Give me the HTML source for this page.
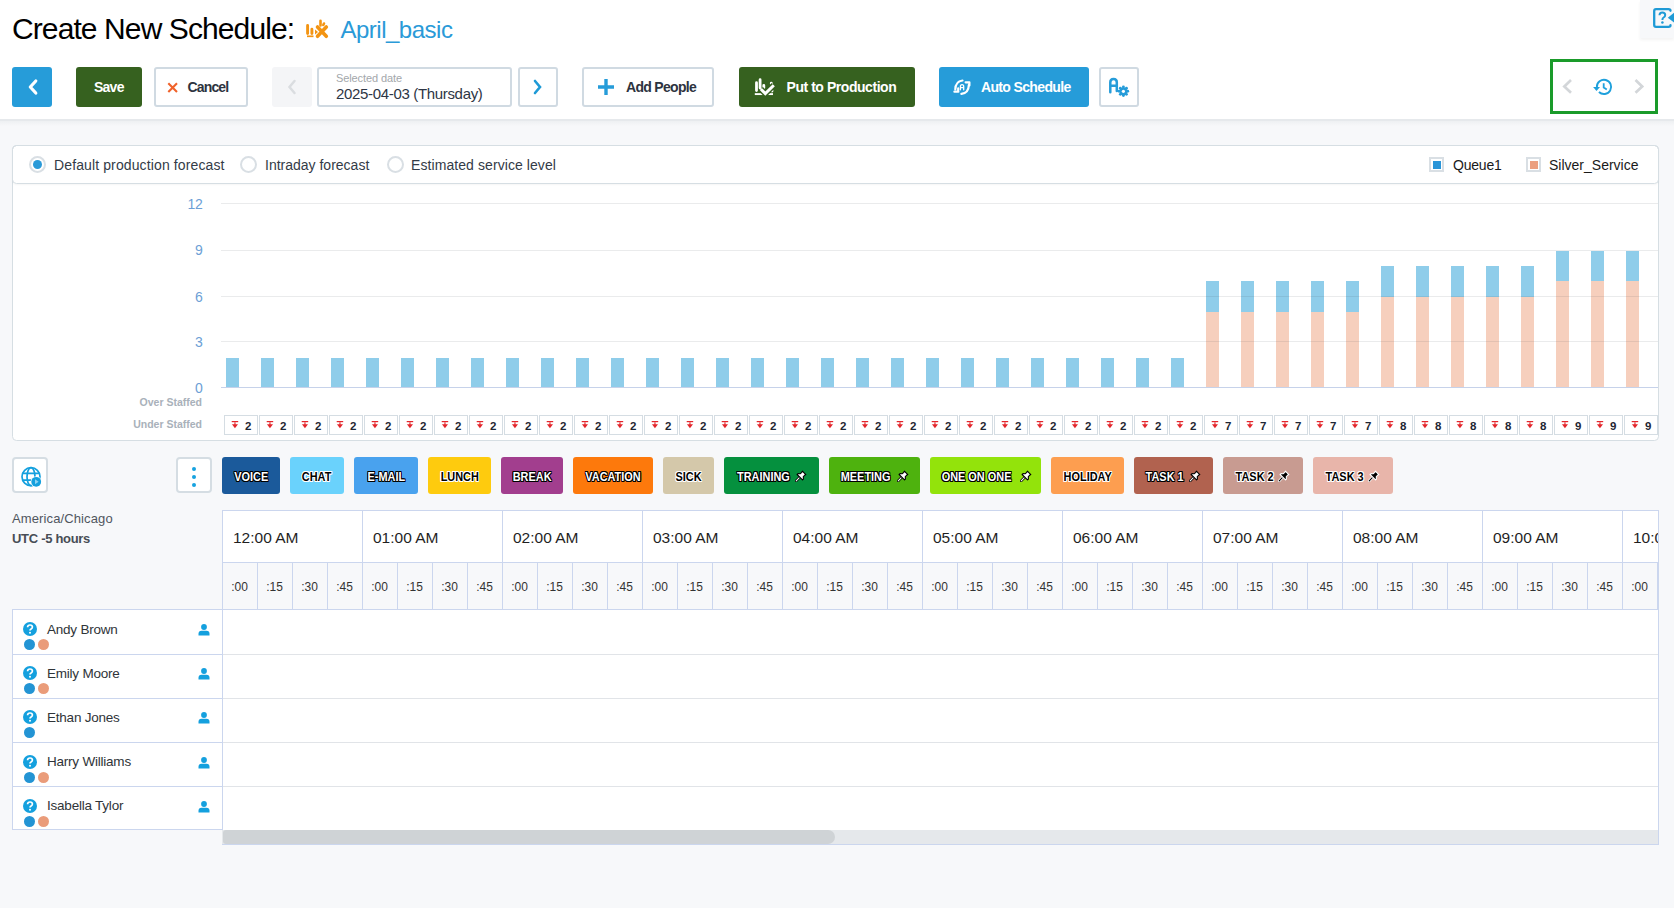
<!DOCTYPE html>
<html><head><meta charset="utf-8">
<style>
*{box-sizing:border-box;margin:0;padding:0}
html,body{width:1674px;height:908px;overflow:hidden;background:#f7f8fa;font-family:"Liberation Sans",sans-serif;position:relative}
.abs{position:absolute}
.btn{position:absolute;border-radius:3px;height:40px;top:67px}
.ol{background:#fff;border:2px solid #d0dae2}
.t{position:absolute;white-space:nowrap;line-height:1}
.chip{position:absolute;top:457px;height:37px;border-radius:3px}
.chip span{position:absolute;white-space:nowrap;font-weight:bold;font-size:13px;line-height:1;top:12px}
.w{color:#fff;text-shadow:-1px 0 #000,1px 0 #000,0 -1px #000,0 1px #000,-1px -1px #000,1px 1px #000,-1px 1px #000,1px -1px #000}
.k{color:#000;text-shadow:-1px 0 #fff,1px 0 #fff,0 -1px #fff,0 1px #fff,-1px -1px #fff,1px 1px #fff,-1px 1px #fff,1px -1px #fff}
</style></head><body>

<div class="abs" style="left:0;top:0;width:1674px;height:119px;background:#fff"></div>
<div class="abs" style="left:0;top:119px;width:1674px;height:2px;background:#e6e9ec"></div>
<div class="abs" style="left:0;top:121px;width:1674px;height:5px;background:linear-gradient(#eef0f2,#f7f8fa)"></div>
<div class="t" style="left:12px;top:14.00px;font-size:30px;color:#000;letter-spacing:-0.9px;">Create New Schedule:</div>
<svg class="abs" style="left:300px;top:10px" width="35" height="35" viewBox="0 0 35 35">
<g stroke="#f39412" stroke-linecap="round" fill="none">
<path d="M7.6 15.4V23.5M11.9 19.3V23.5" stroke-width="2.9"/>
<path d="M7 26.3H13.5" stroke-width="1.7" stroke-linecap="butt"/>
<path d="M20.5 10.8V15.5M24 13.5L23.3 15" stroke-width="2.6"/>
<path d="M17.5 17L26.3 26.3M26.3 17L17.5 26.3" stroke-width="3.6"/>
</g>
<path d="M15 19.5L18 22L15 24.5Z" fill="#f39412"/>
</svg>
<div class="t" style="left:340.5px;top:17.68px;font-size:24px;color:#2a9ad8;letter-spacing:-0.5px;">April_basic</div>
<div class="abs" style="left:1640px;top:0;width:34px;height:38px;background:#f7f8fa;box-shadow:0 2px 3px rgba(0,0,0,0.05)"></div>
<svg class="abs" style="left:1653px;top:8px" width="21" height="20" viewBox="0 0 21 20">
<path d="M17.5 2.8Q17.5 1.2 15.5 1.2H3Q1.2 1.2 1.2 3V17Q1.2 18.8 3 18.8H15.5Q17.5 18.8 17.5 17.2" fill="none" stroke="#1e9ad6" stroke-width="2.3" stroke-linecap="round"/>
<path d="M21 4.7L14.8 9.8L21 14.6Z" fill="#1e9ad6"/>
<path d="M6.5 7.3Q6.5 4.4 9.3 4.4Q12.2 4.4 12.2 7Q12.2 8.6 10.6 9.5Q9.4 10.2 9.4 12" fill="none" stroke="#1e9ad6" stroke-width="2"/>
<circle cx="9.4" cy="14.6" r="1.25" fill="#1e9ad6"/>
</svg>
<div class="btn" style="left:12px;width:40px;background:#269cd9"></div>
<svg class="abs" style="left:12px;top:67px" width="40" height="40"><path d="M23.8 14L18.3 20L23.8 26" fill="none" stroke="#fff" stroke-width="3.2" stroke-linecap="round" stroke-linejoin="round"/></svg>
<div class="btn" style="left:76px;width:66px;background:#36611f"></div>
<div class="t" style="left:94px;top:80.15px;font-size:14px;font-weight:bold;color:#fff;letter-spacing:-0.75px;">Save</div>
<div class="btn ol" style="left:154px;width:94px"></div>
<svg class="abs" style="left:166px;top:81px" width="13" height="13"><path d="M2.3 2.3L11 11M11 2.3L2.3 11" stroke="#f0622a" stroke-width="2.1"/></svg>
<div class="t" style="left:187.5px;top:80.15px;font-size:14px;font-weight:bold;color:#2d3340;letter-spacing:-0.85px;">Cancel</div>
<div class="btn" style="left:272px;width:40px;background:#f4f5f7"></div>
<svg class="abs" style="left:272px;top:67px" width="40" height="40"><path d="M22.5 14L17.5 20L22.5 26" fill="none" stroke="#dadde0" stroke-width="2.5" stroke-linecap="round"/></svg>
<div class="btn ol" style="left:317px;width:195px"></div>
<div class="t" style="left:336px;top:73.49px;font-size:11px;color:#a3a7ab;letter-spacing:-0.1px;">Selected date</div>
<div class="t" style="left:336px;top:86.20px;font-size:15px;color:#2d3645;letter-spacing:-0.33px;">2025-04-03 (Thursday)</div>
<div class="btn ol" style="left:518px;width:40px"></div>
<svg class="abs" style="left:518px;top:67px" width="39" height="40"><path d="M17 14L22 20L17 26" fill="none" stroke="#1e9ad6" stroke-width="2.6" stroke-linecap="round"/></svg>
<div class="btn ol" style="left:582px;width:132px"></div>
<svg class="abs" style="left:597px;top:78px" width="18" height="18"><path d="M9 1V17M1 9H17" stroke="#269cd9" stroke-width="3.4"/></svg>
<div class="t" style="left:626px;top:80.45px;font-size:14px;font-weight:bold;color:#2d3340;letter-spacing:-0.7px;">Add People</div>
<div class="btn" style="left:739px;width:176px;background:#36611f"></div>
<svg class="abs" style="left:754px;top:77px" width="22" height="20" viewBox="0 0 22 20" fill="none">
<g stroke="#fff" stroke-linecap="round"><path d="M2.5 5.7V13.5M6.1 2.7V11M9.8 8.3V11M17.3 6.2V6.8M18 13.6V14" stroke-width="2.8"/></g>
<path d="M0.8 17.1H19" stroke="#fff" stroke-width="1.9"/>
<path d="M6.8 12L11.3 16.6L19.8 8.2" stroke="#36611f" stroke-width="6" stroke-linejoin="miter"/>
<path d="M6.8 12L11.3 16.6L19.8 8.2" stroke="#fff" stroke-width="3" stroke-linejoin="miter"/></svg>
<div class="t" style="left:786.5px;top:80.45px;font-size:14px;font-weight:bold;color:#fff;letter-spacing:-0.45px;">Put to Production</div>
<div class="btn" style="left:939px;width:150px;background:#269cd9"></div>
<svg class="abs" style="left:953px;top:79px" width="18" height="17" viewBox="0 0 18 17" fill="none" stroke="#fff" stroke-width="2.2" stroke-linecap="round">
<path d="M9.5 1.5Q2.5 2.3 2.3 10.5"/><path d="M1.4 12.7H5.4M5.2 12.7V9.4"/>
<path d="M8.4 14.8Q15.6 14 15.8 6.2"/><path d="M12.6 3.3H16.4M16.4 3.3V6.4"/>
<path d="M7.4 10.8V7.6Q7.4 5.6 9.05 5.6Q10.7 5.6 10.7 7.6V10.8M7.4 8.7H10.7" stroke-width="1.3"/></svg>
<div class="t" style="left:981px;top:80.45px;font-size:14px;font-weight:bold;color:#fff;letter-spacing:-0.65px;">Auto Schedule</div>
<div class="btn ol" style="left:1099px;width:40px"></div>
<svg class="abs" style="left:1108px;top:76px" width="22" height="22" viewBox="0 0 22 22">
<path d="M2.3 16.2V6.3Q2.3 3 5.55 3Q8.8 3 8.8 6.3V15M2.3 9.7H8.8" fill="none" stroke="#269cd9" stroke-width="2.5" stroke-linecap="round"/>
<g transform="translate(15.4,15.3)"><circle r="5" fill="#fff"/><circle r="3.9" fill="#269cd9"/>
<g fill="#269cd9"><circle cx="0" cy="-4.3" r="1.45"/><circle cx="0" cy="4.3" r="1.45"/><circle cx="-4.3" cy="0" r="1.45"/><circle cx="4.3" cy="0" r="1.45"/>
<circle cx="3.04" cy="3.04" r="1.45"/><circle cx="-3.04" cy="3.04" r="1.45"/><circle cx="3.04" cy="-3.04" r="1.45"/><circle cx="-3.04" cy="-3.04" r="1.45"/></g>
<circle r="1.6" fill="#fff"/></g></svg>
<div class="abs" style="left:1550px;top:59px;width:108px;height:55px;border:3px solid #1a9b2a;background:#fff"></div>
<svg class="abs" style="left:1560px;top:77px" width="90" height="20" viewBox="0 0 90 20"><path d="M11 3L4.3 9.4L11 15.8" fill="none" stroke="#d3d6d9" stroke-width="2.7"/><path d="M75.5 3L82.2 9.4L75.5 15.8" fill="none" stroke="#d3d6d9" stroke-width="2.7"/><path d="M36.85 10 A7.15 7.15 0 1 1 38.94 14.96" fill="none" stroke="#1ea0dc" stroke-width="1.9"/><path d="M33.1 10L40 10L36.5 13.9Z" fill="#1ea0dc"/><path d="M43.7 6.2V10.5L46.8 12.5" fill="none" stroke="#1ea0dc" stroke-width="1.8"/></svg>
<div class="abs" style="left:12px;top:145px;width:1647px;height:296px;background:#fff;border:1px solid #d6dee3;border-radius:4.5px"></div>
<div class="abs" style="left:12px;top:145px;width:1647px;height:39px;border:1px solid #d6dee3;border-radius:4.5px;box-shadow:0 1px 2px rgba(0,0,0,0.04)"></div>
<div class="abs" style="left:29px;top:156px;width:17px;height:17px;border-radius:50%;border:2px solid #d9dfe4;background:#fff"></div><div class="abs" style="left:33px;top:160px;width:9px;height:9px;border-radius:50%;background:#2a9ad8"></div>
<div class="t" style="left:54px;top:158px;font-size:14px;color:#333b47;letter-spacing:0.12px">Default production forecast</div>
<div class="abs" style="left:240px;top:156px;width:17px;height:17px;border-radius:50%;border:2px solid #d9dfe4;background:#fff"></div>
<div class="t" style="left:265px;top:158px;font-size:14px;color:#333b47">Intraday forecast</div>
<div class="abs" style="left:387px;top:156px;width:17px;height:17px;border-radius:50%;border:2px solid #d9dfe4;background:#fff"></div>
<div class="t" style="left:411px;top:158px;font-size:14px;color:#333b47;letter-spacing:0.08px">Estimated service level</div>
<div class="abs" style="left:1429px;top:157px;width:15px;height:15px;border:2px solid #d9dfe4;background:#fff"></div><div class="abs" style="left:1432.5px;top:160.5px;width:8px;height:8px;background:#2a95d8"></div>
<div class="t" style="left:1453px;top:158px;font-size:14px;color:#1a1a1a;letter-spacing:-0.2px">Queue1</div>
<div class="abs" style="left:1526px;top:157px;width:15px;height:15px;border:2px solid #d9dfe4;background:#fff"></div><div class="abs" style="left:1529.5px;top:160.5px;width:8px;height:8px;background:#eb9f7f"></div>
<div class="t" style="left:1549px;top:158px;font-size:14px;color:#1a1a1a;letter-spacing:0px">Silver_Service</div>
<div class="t" style="left:150px;width:52.5px;text-align:right;top:197.15px;font-size:14px;color:#6d9fd6;letter-spacing:-0.3px">12</div>
<div class="t" style="left:150px;width:52.5px;text-align:right;top:243.45px;font-size:14px;color:#6d9fd6;letter-spacing:-0.3px">9</div>
<div class="t" style="left:150px;width:52.5px;text-align:right;top:289.65px;font-size:14px;color:#6d9fd6;letter-spacing:-0.3px">6</div>
<div class="t" style="left:150px;width:52.5px;text-align:right;top:335.45px;font-size:14px;color:#6d9fd6;letter-spacing:-0.3px">3</div>
<div class="t" style="left:150px;width:52.5px;text-align:right;top:381.45px;font-size:14px;color:#6d9fd6;letter-spacing:-0.3px">0</div>
<div class="t" style="left:100px;top:397.11px;font-size:10.5px;font-weight:bold;color:#a9b1ba;letter-spacing:0px;width:102px;text-align:right">Over Staffed</div>
<div class="t" style="left:100px;top:419.11px;font-size:10.5px;font-weight:bold;color:#a9b1ba;letter-spacing:0px;width:102px;text-align:right">Under Staffed</div>
<div class="abs" style="left:226px;top:358px;width:13px;height:29.2px;background:#8fcdea"></div>
<div class="abs" style="left:261px;top:358px;width:13px;height:29.2px;background:#8fcdea"></div>
<div class="abs" style="left:296px;top:358px;width:13px;height:29.2px;background:#8fcdea"></div>
<div class="abs" style="left:331px;top:358px;width:13px;height:29.2px;background:#8fcdea"></div>
<div class="abs" style="left:366px;top:358px;width:13px;height:29.2px;background:#8fcdea"></div>
<div class="abs" style="left:401px;top:358px;width:13px;height:29.2px;background:#8fcdea"></div>
<div class="abs" style="left:436px;top:358px;width:13px;height:29.2px;background:#8fcdea"></div>
<div class="abs" style="left:471px;top:358px;width:13px;height:29.2px;background:#8fcdea"></div>
<div class="abs" style="left:506px;top:358px;width:13px;height:29.2px;background:#8fcdea"></div>
<div class="abs" style="left:541px;top:358px;width:13px;height:29.2px;background:#8fcdea"></div>
<div class="abs" style="left:576px;top:358px;width:13px;height:29.2px;background:#8fcdea"></div>
<div class="abs" style="left:611px;top:358px;width:13px;height:29.2px;background:#8fcdea"></div>
<div class="abs" style="left:646px;top:358px;width:13px;height:29.2px;background:#8fcdea"></div>
<div class="abs" style="left:681px;top:358px;width:13px;height:29.2px;background:#8fcdea"></div>
<div class="abs" style="left:716px;top:358px;width:13px;height:29.2px;background:#8fcdea"></div>
<div class="abs" style="left:751px;top:358px;width:13px;height:29.2px;background:#8fcdea"></div>
<div class="abs" style="left:786px;top:358px;width:13px;height:29.2px;background:#8fcdea"></div>
<div class="abs" style="left:821px;top:358px;width:13px;height:29.2px;background:#8fcdea"></div>
<div class="abs" style="left:856px;top:358px;width:13px;height:29.2px;background:#8fcdea"></div>
<div class="abs" style="left:891px;top:358px;width:13px;height:29.2px;background:#8fcdea"></div>
<div class="abs" style="left:926px;top:358px;width:13px;height:29.2px;background:#8fcdea"></div>
<div class="abs" style="left:961px;top:358px;width:13px;height:29.2px;background:#8fcdea"></div>
<div class="abs" style="left:996px;top:358px;width:13px;height:29.2px;background:#8fcdea"></div>
<div class="abs" style="left:1031px;top:358px;width:13px;height:29.2px;background:#8fcdea"></div>
<div class="abs" style="left:1066px;top:358px;width:13px;height:29.2px;background:#8fcdea"></div>
<div class="abs" style="left:1101px;top:358px;width:13px;height:29.2px;background:#8fcdea"></div>
<div class="abs" style="left:1136px;top:358px;width:13px;height:29.2px;background:#8fcdea"></div>
<div class="abs" style="left:1171px;top:358px;width:13px;height:29.2px;background:#8fcdea"></div>
<div class="abs" style="left:1206px;top:312px;width:13px;height:75.2px;background:#f6cfbd"></div>
<div class="abs" style="left:1206px;top:281px;width:13px;height:31.0px;background:#8fcdea"></div>
<div class="abs" style="left:1241px;top:312px;width:13px;height:75.2px;background:#f6cfbd"></div>
<div class="abs" style="left:1241px;top:281px;width:13px;height:31.0px;background:#8fcdea"></div>
<div class="abs" style="left:1276px;top:312px;width:13px;height:75.2px;background:#f6cfbd"></div>
<div class="abs" style="left:1276px;top:281px;width:13px;height:31.0px;background:#8fcdea"></div>
<div class="abs" style="left:1311px;top:312px;width:13px;height:75.2px;background:#f6cfbd"></div>
<div class="abs" style="left:1311px;top:281px;width:13px;height:31.0px;background:#8fcdea"></div>
<div class="abs" style="left:1346px;top:312px;width:13px;height:75.2px;background:#f6cfbd"></div>
<div class="abs" style="left:1346px;top:281px;width:13px;height:31.0px;background:#8fcdea"></div>
<div class="abs" style="left:1381px;top:296.5px;width:13px;height:90.7px;background:#f6cfbd"></div>
<div class="abs" style="left:1381px;top:266px;width:13px;height:30.5px;background:#8fcdea"></div>
<div class="abs" style="left:1416px;top:296.5px;width:13px;height:90.7px;background:#f6cfbd"></div>
<div class="abs" style="left:1416px;top:266px;width:13px;height:30.5px;background:#8fcdea"></div>
<div class="abs" style="left:1451px;top:296.5px;width:13px;height:90.7px;background:#f6cfbd"></div>
<div class="abs" style="left:1451px;top:266px;width:13px;height:30.5px;background:#8fcdea"></div>
<div class="abs" style="left:1486px;top:296.5px;width:13px;height:90.7px;background:#f6cfbd"></div>
<div class="abs" style="left:1486px;top:266px;width:13px;height:30.5px;background:#8fcdea"></div>
<div class="abs" style="left:1521px;top:296.5px;width:13px;height:90.7px;background:#f6cfbd"></div>
<div class="abs" style="left:1521px;top:266px;width:13px;height:30.5px;background:#8fcdea"></div>
<div class="abs" style="left:1556px;top:281px;width:13px;height:106.2px;background:#f6cfbd"></div>
<div class="abs" style="left:1556px;top:250.5px;width:13px;height:30.5px;background:#8fcdea"></div>
<div class="abs" style="left:1591px;top:281px;width:13px;height:106.2px;background:#f6cfbd"></div>
<div class="abs" style="left:1591px;top:250.5px;width:13px;height:30.5px;background:#8fcdea"></div>
<div class="abs" style="left:1626px;top:281px;width:13px;height:106.2px;background:#f6cfbd"></div>
<div class="abs" style="left:1626px;top:250.5px;width:13px;height:30.5px;background:#8fcdea"></div>
<div class="abs" style="left:221px;top:203px;width:1437px;height:1px;background:rgba(60,70,80,0.11)"></div>
<div class="abs" style="left:221px;top:250px;width:1437px;height:1px;background:rgba(60,70,80,0.11)"></div>
<div class="abs" style="left:221px;top:296px;width:1437px;height:1px;background:rgba(60,70,80,0.11)"></div>
<div class="abs" style="left:221px;top:341px;width:1437px;height:1px;background:rgba(60,70,80,0.11)"></div>
<div class="abs" style="left:221px;top:387px;width:1437px;height:1px;background:#c6d2ea"></div>
<div class="abs" style="left:224px;top:415px;width:34px;height:20px;border:1px solid #d5dde3;background:#fff"><svg class="abs" style="left:6px;top:4px" width="8" height="9" viewBox="0 0 8 9"><rect x="0.7" y="1" width="6.5" height="1.2" fill="#e3262b"/><rect x="3.2" y="2.2" width="1.5" height="3" fill="#ec5a5e"/><path d="M0.9 4.3L7 4.3L3.95 8.3Z" fill="#e3262b"/></svg><div class="t" style="left:20px;top:4.8px;font-size:11.5px;font-weight:bold;color:#1f2633">2</div></div>
<div class="abs" style="left:259px;top:415px;width:34px;height:20px;border:1px solid #d5dde3;background:#fff"><svg class="abs" style="left:6px;top:4px" width="8" height="9" viewBox="0 0 8 9"><rect x="0.7" y="1" width="6.5" height="1.2" fill="#e3262b"/><rect x="3.2" y="2.2" width="1.5" height="3" fill="#ec5a5e"/><path d="M0.9 4.3L7 4.3L3.95 8.3Z" fill="#e3262b"/></svg><div class="t" style="left:20px;top:4.8px;font-size:11.5px;font-weight:bold;color:#1f2633">2</div></div>
<div class="abs" style="left:294px;top:415px;width:34px;height:20px;border:1px solid #d5dde3;background:#fff"><svg class="abs" style="left:6px;top:4px" width="8" height="9" viewBox="0 0 8 9"><rect x="0.7" y="1" width="6.5" height="1.2" fill="#e3262b"/><rect x="3.2" y="2.2" width="1.5" height="3" fill="#ec5a5e"/><path d="M0.9 4.3L7 4.3L3.95 8.3Z" fill="#e3262b"/></svg><div class="t" style="left:20px;top:4.8px;font-size:11.5px;font-weight:bold;color:#1f2633">2</div></div>
<div class="abs" style="left:329px;top:415px;width:34px;height:20px;border:1px solid #d5dde3;background:#fff"><svg class="abs" style="left:6px;top:4px" width="8" height="9" viewBox="0 0 8 9"><rect x="0.7" y="1" width="6.5" height="1.2" fill="#e3262b"/><rect x="3.2" y="2.2" width="1.5" height="3" fill="#ec5a5e"/><path d="M0.9 4.3L7 4.3L3.95 8.3Z" fill="#e3262b"/></svg><div class="t" style="left:20px;top:4.8px;font-size:11.5px;font-weight:bold;color:#1f2633">2</div></div>
<div class="abs" style="left:364px;top:415px;width:34px;height:20px;border:1px solid #d5dde3;background:#fff"><svg class="abs" style="left:6px;top:4px" width="8" height="9" viewBox="0 0 8 9"><rect x="0.7" y="1" width="6.5" height="1.2" fill="#e3262b"/><rect x="3.2" y="2.2" width="1.5" height="3" fill="#ec5a5e"/><path d="M0.9 4.3L7 4.3L3.95 8.3Z" fill="#e3262b"/></svg><div class="t" style="left:20px;top:4.8px;font-size:11.5px;font-weight:bold;color:#1f2633">2</div></div>
<div class="abs" style="left:399px;top:415px;width:34px;height:20px;border:1px solid #d5dde3;background:#fff"><svg class="abs" style="left:6px;top:4px" width="8" height="9" viewBox="0 0 8 9"><rect x="0.7" y="1" width="6.5" height="1.2" fill="#e3262b"/><rect x="3.2" y="2.2" width="1.5" height="3" fill="#ec5a5e"/><path d="M0.9 4.3L7 4.3L3.95 8.3Z" fill="#e3262b"/></svg><div class="t" style="left:20px;top:4.8px;font-size:11.5px;font-weight:bold;color:#1f2633">2</div></div>
<div class="abs" style="left:434px;top:415px;width:34px;height:20px;border:1px solid #d5dde3;background:#fff"><svg class="abs" style="left:6px;top:4px" width="8" height="9" viewBox="0 0 8 9"><rect x="0.7" y="1" width="6.5" height="1.2" fill="#e3262b"/><rect x="3.2" y="2.2" width="1.5" height="3" fill="#ec5a5e"/><path d="M0.9 4.3L7 4.3L3.95 8.3Z" fill="#e3262b"/></svg><div class="t" style="left:20px;top:4.8px;font-size:11.5px;font-weight:bold;color:#1f2633">2</div></div>
<div class="abs" style="left:469px;top:415px;width:34px;height:20px;border:1px solid #d5dde3;background:#fff"><svg class="abs" style="left:6px;top:4px" width="8" height="9" viewBox="0 0 8 9"><rect x="0.7" y="1" width="6.5" height="1.2" fill="#e3262b"/><rect x="3.2" y="2.2" width="1.5" height="3" fill="#ec5a5e"/><path d="M0.9 4.3L7 4.3L3.95 8.3Z" fill="#e3262b"/></svg><div class="t" style="left:20px;top:4.8px;font-size:11.5px;font-weight:bold;color:#1f2633">2</div></div>
<div class="abs" style="left:504px;top:415px;width:34px;height:20px;border:1px solid #d5dde3;background:#fff"><svg class="abs" style="left:6px;top:4px" width="8" height="9" viewBox="0 0 8 9"><rect x="0.7" y="1" width="6.5" height="1.2" fill="#e3262b"/><rect x="3.2" y="2.2" width="1.5" height="3" fill="#ec5a5e"/><path d="M0.9 4.3L7 4.3L3.95 8.3Z" fill="#e3262b"/></svg><div class="t" style="left:20px;top:4.8px;font-size:11.5px;font-weight:bold;color:#1f2633">2</div></div>
<div class="abs" style="left:539px;top:415px;width:34px;height:20px;border:1px solid #d5dde3;background:#fff"><svg class="abs" style="left:6px;top:4px" width="8" height="9" viewBox="0 0 8 9"><rect x="0.7" y="1" width="6.5" height="1.2" fill="#e3262b"/><rect x="3.2" y="2.2" width="1.5" height="3" fill="#ec5a5e"/><path d="M0.9 4.3L7 4.3L3.95 8.3Z" fill="#e3262b"/></svg><div class="t" style="left:20px;top:4.8px;font-size:11.5px;font-weight:bold;color:#1f2633">2</div></div>
<div class="abs" style="left:574px;top:415px;width:34px;height:20px;border:1px solid #d5dde3;background:#fff"><svg class="abs" style="left:6px;top:4px" width="8" height="9" viewBox="0 0 8 9"><rect x="0.7" y="1" width="6.5" height="1.2" fill="#e3262b"/><rect x="3.2" y="2.2" width="1.5" height="3" fill="#ec5a5e"/><path d="M0.9 4.3L7 4.3L3.95 8.3Z" fill="#e3262b"/></svg><div class="t" style="left:20px;top:4.8px;font-size:11.5px;font-weight:bold;color:#1f2633">2</div></div>
<div class="abs" style="left:609px;top:415px;width:34px;height:20px;border:1px solid #d5dde3;background:#fff"><svg class="abs" style="left:6px;top:4px" width="8" height="9" viewBox="0 0 8 9"><rect x="0.7" y="1" width="6.5" height="1.2" fill="#e3262b"/><rect x="3.2" y="2.2" width="1.5" height="3" fill="#ec5a5e"/><path d="M0.9 4.3L7 4.3L3.95 8.3Z" fill="#e3262b"/></svg><div class="t" style="left:20px;top:4.8px;font-size:11.5px;font-weight:bold;color:#1f2633">2</div></div>
<div class="abs" style="left:644px;top:415px;width:34px;height:20px;border:1px solid #d5dde3;background:#fff"><svg class="abs" style="left:6px;top:4px" width="8" height="9" viewBox="0 0 8 9"><rect x="0.7" y="1" width="6.5" height="1.2" fill="#e3262b"/><rect x="3.2" y="2.2" width="1.5" height="3" fill="#ec5a5e"/><path d="M0.9 4.3L7 4.3L3.95 8.3Z" fill="#e3262b"/></svg><div class="t" style="left:20px;top:4.8px;font-size:11.5px;font-weight:bold;color:#1f2633">2</div></div>
<div class="abs" style="left:679px;top:415px;width:34px;height:20px;border:1px solid #d5dde3;background:#fff"><svg class="abs" style="left:6px;top:4px" width="8" height="9" viewBox="0 0 8 9"><rect x="0.7" y="1" width="6.5" height="1.2" fill="#e3262b"/><rect x="3.2" y="2.2" width="1.5" height="3" fill="#ec5a5e"/><path d="M0.9 4.3L7 4.3L3.95 8.3Z" fill="#e3262b"/></svg><div class="t" style="left:20px;top:4.8px;font-size:11.5px;font-weight:bold;color:#1f2633">2</div></div>
<div class="abs" style="left:714px;top:415px;width:34px;height:20px;border:1px solid #d5dde3;background:#fff"><svg class="abs" style="left:6px;top:4px" width="8" height="9" viewBox="0 0 8 9"><rect x="0.7" y="1" width="6.5" height="1.2" fill="#e3262b"/><rect x="3.2" y="2.2" width="1.5" height="3" fill="#ec5a5e"/><path d="M0.9 4.3L7 4.3L3.95 8.3Z" fill="#e3262b"/></svg><div class="t" style="left:20px;top:4.8px;font-size:11.5px;font-weight:bold;color:#1f2633">2</div></div>
<div class="abs" style="left:749px;top:415px;width:34px;height:20px;border:1px solid #d5dde3;background:#fff"><svg class="abs" style="left:6px;top:4px" width="8" height="9" viewBox="0 0 8 9"><rect x="0.7" y="1" width="6.5" height="1.2" fill="#e3262b"/><rect x="3.2" y="2.2" width="1.5" height="3" fill="#ec5a5e"/><path d="M0.9 4.3L7 4.3L3.95 8.3Z" fill="#e3262b"/></svg><div class="t" style="left:20px;top:4.8px;font-size:11.5px;font-weight:bold;color:#1f2633">2</div></div>
<div class="abs" style="left:784px;top:415px;width:34px;height:20px;border:1px solid #d5dde3;background:#fff"><svg class="abs" style="left:6px;top:4px" width="8" height="9" viewBox="0 0 8 9"><rect x="0.7" y="1" width="6.5" height="1.2" fill="#e3262b"/><rect x="3.2" y="2.2" width="1.5" height="3" fill="#ec5a5e"/><path d="M0.9 4.3L7 4.3L3.95 8.3Z" fill="#e3262b"/></svg><div class="t" style="left:20px;top:4.8px;font-size:11.5px;font-weight:bold;color:#1f2633">2</div></div>
<div class="abs" style="left:819px;top:415px;width:34px;height:20px;border:1px solid #d5dde3;background:#fff"><svg class="abs" style="left:6px;top:4px" width="8" height="9" viewBox="0 0 8 9"><rect x="0.7" y="1" width="6.5" height="1.2" fill="#e3262b"/><rect x="3.2" y="2.2" width="1.5" height="3" fill="#ec5a5e"/><path d="M0.9 4.3L7 4.3L3.95 8.3Z" fill="#e3262b"/></svg><div class="t" style="left:20px;top:4.8px;font-size:11.5px;font-weight:bold;color:#1f2633">2</div></div>
<div class="abs" style="left:854px;top:415px;width:34px;height:20px;border:1px solid #d5dde3;background:#fff"><svg class="abs" style="left:6px;top:4px" width="8" height="9" viewBox="0 0 8 9"><rect x="0.7" y="1" width="6.5" height="1.2" fill="#e3262b"/><rect x="3.2" y="2.2" width="1.5" height="3" fill="#ec5a5e"/><path d="M0.9 4.3L7 4.3L3.95 8.3Z" fill="#e3262b"/></svg><div class="t" style="left:20px;top:4.8px;font-size:11.5px;font-weight:bold;color:#1f2633">2</div></div>
<div class="abs" style="left:889px;top:415px;width:34px;height:20px;border:1px solid #d5dde3;background:#fff"><svg class="abs" style="left:6px;top:4px" width="8" height="9" viewBox="0 0 8 9"><rect x="0.7" y="1" width="6.5" height="1.2" fill="#e3262b"/><rect x="3.2" y="2.2" width="1.5" height="3" fill="#ec5a5e"/><path d="M0.9 4.3L7 4.3L3.95 8.3Z" fill="#e3262b"/></svg><div class="t" style="left:20px;top:4.8px;font-size:11.5px;font-weight:bold;color:#1f2633">2</div></div>
<div class="abs" style="left:924px;top:415px;width:34px;height:20px;border:1px solid #d5dde3;background:#fff"><svg class="abs" style="left:6px;top:4px" width="8" height="9" viewBox="0 0 8 9"><rect x="0.7" y="1" width="6.5" height="1.2" fill="#e3262b"/><rect x="3.2" y="2.2" width="1.5" height="3" fill="#ec5a5e"/><path d="M0.9 4.3L7 4.3L3.95 8.3Z" fill="#e3262b"/></svg><div class="t" style="left:20px;top:4.8px;font-size:11.5px;font-weight:bold;color:#1f2633">2</div></div>
<div class="abs" style="left:959px;top:415px;width:34px;height:20px;border:1px solid #d5dde3;background:#fff"><svg class="abs" style="left:6px;top:4px" width="8" height="9" viewBox="0 0 8 9"><rect x="0.7" y="1" width="6.5" height="1.2" fill="#e3262b"/><rect x="3.2" y="2.2" width="1.5" height="3" fill="#ec5a5e"/><path d="M0.9 4.3L7 4.3L3.95 8.3Z" fill="#e3262b"/></svg><div class="t" style="left:20px;top:4.8px;font-size:11.5px;font-weight:bold;color:#1f2633">2</div></div>
<div class="abs" style="left:994px;top:415px;width:34px;height:20px;border:1px solid #d5dde3;background:#fff"><svg class="abs" style="left:6px;top:4px" width="8" height="9" viewBox="0 0 8 9"><rect x="0.7" y="1" width="6.5" height="1.2" fill="#e3262b"/><rect x="3.2" y="2.2" width="1.5" height="3" fill="#ec5a5e"/><path d="M0.9 4.3L7 4.3L3.95 8.3Z" fill="#e3262b"/></svg><div class="t" style="left:20px;top:4.8px;font-size:11.5px;font-weight:bold;color:#1f2633">2</div></div>
<div class="abs" style="left:1029px;top:415px;width:34px;height:20px;border:1px solid #d5dde3;background:#fff"><svg class="abs" style="left:6px;top:4px" width="8" height="9" viewBox="0 0 8 9"><rect x="0.7" y="1" width="6.5" height="1.2" fill="#e3262b"/><rect x="3.2" y="2.2" width="1.5" height="3" fill="#ec5a5e"/><path d="M0.9 4.3L7 4.3L3.95 8.3Z" fill="#e3262b"/></svg><div class="t" style="left:20px;top:4.8px;font-size:11.5px;font-weight:bold;color:#1f2633">2</div></div>
<div class="abs" style="left:1064px;top:415px;width:34px;height:20px;border:1px solid #d5dde3;background:#fff"><svg class="abs" style="left:6px;top:4px" width="8" height="9" viewBox="0 0 8 9"><rect x="0.7" y="1" width="6.5" height="1.2" fill="#e3262b"/><rect x="3.2" y="2.2" width="1.5" height="3" fill="#ec5a5e"/><path d="M0.9 4.3L7 4.3L3.95 8.3Z" fill="#e3262b"/></svg><div class="t" style="left:20px;top:4.8px;font-size:11.5px;font-weight:bold;color:#1f2633">2</div></div>
<div class="abs" style="left:1099px;top:415px;width:34px;height:20px;border:1px solid #d5dde3;background:#fff"><svg class="abs" style="left:6px;top:4px" width="8" height="9" viewBox="0 0 8 9"><rect x="0.7" y="1" width="6.5" height="1.2" fill="#e3262b"/><rect x="3.2" y="2.2" width="1.5" height="3" fill="#ec5a5e"/><path d="M0.9 4.3L7 4.3L3.95 8.3Z" fill="#e3262b"/></svg><div class="t" style="left:20px;top:4.8px;font-size:11.5px;font-weight:bold;color:#1f2633">2</div></div>
<div class="abs" style="left:1134px;top:415px;width:34px;height:20px;border:1px solid #d5dde3;background:#fff"><svg class="abs" style="left:6px;top:4px" width="8" height="9" viewBox="0 0 8 9"><rect x="0.7" y="1" width="6.5" height="1.2" fill="#e3262b"/><rect x="3.2" y="2.2" width="1.5" height="3" fill="#ec5a5e"/><path d="M0.9 4.3L7 4.3L3.95 8.3Z" fill="#e3262b"/></svg><div class="t" style="left:20px;top:4.8px;font-size:11.5px;font-weight:bold;color:#1f2633">2</div></div>
<div class="abs" style="left:1169px;top:415px;width:34px;height:20px;border:1px solid #d5dde3;background:#fff"><svg class="abs" style="left:6px;top:4px" width="8" height="9" viewBox="0 0 8 9"><rect x="0.7" y="1" width="6.5" height="1.2" fill="#e3262b"/><rect x="3.2" y="2.2" width="1.5" height="3" fill="#ec5a5e"/><path d="M0.9 4.3L7 4.3L3.95 8.3Z" fill="#e3262b"/></svg><div class="t" style="left:20px;top:4.8px;font-size:11.5px;font-weight:bold;color:#1f2633">2</div></div>
<div class="abs" style="left:1204px;top:415px;width:34px;height:20px;border:1px solid #d5dde3;background:#fff"><svg class="abs" style="left:6px;top:4px" width="8" height="9" viewBox="0 0 8 9"><rect x="0.7" y="1" width="6.5" height="1.2" fill="#e3262b"/><rect x="3.2" y="2.2" width="1.5" height="3" fill="#ec5a5e"/><path d="M0.9 4.3L7 4.3L3.95 8.3Z" fill="#e3262b"/></svg><div class="t" style="left:20px;top:4.8px;font-size:11.5px;font-weight:bold;color:#1f2633">7</div></div>
<div class="abs" style="left:1239px;top:415px;width:34px;height:20px;border:1px solid #d5dde3;background:#fff"><svg class="abs" style="left:6px;top:4px" width="8" height="9" viewBox="0 0 8 9"><rect x="0.7" y="1" width="6.5" height="1.2" fill="#e3262b"/><rect x="3.2" y="2.2" width="1.5" height="3" fill="#ec5a5e"/><path d="M0.9 4.3L7 4.3L3.95 8.3Z" fill="#e3262b"/></svg><div class="t" style="left:20px;top:4.8px;font-size:11.5px;font-weight:bold;color:#1f2633">7</div></div>
<div class="abs" style="left:1274px;top:415px;width:34px;height:20px;border:1px solid #d5dde3;background:#fff"><svg class="abs" style="left:6px;top:4px" width="8" height="9" viewBox="0 0 8 9"><rect x="0.7" y="1" width="6.5" height="1.2" fill="#e3262b"/><rect x="3.2" y="2.2" width="1.5" height="3" fill="#ec5a5e"/><path d="M0.9 4.3L7 4.3L3.95 8.3Z" fill="#e3262b"/></svg><div class="t" style="left:20px;top:4.8px;font-size:11.5px;font-weight:bold;color:#1f2633">7</div></div>
<div class="abs" style="left:1309px;top:415px;width:34px;height:20px;border:1px solid #d5dde3;background:#fff"><svg class="abs" style="left:6px;top:4px" width="8" height="9" viewBox="0 0 8 9"><rect x="0.7" y="1" width="6.5" height="1.2" fill="#e3262b"/><rect x="3.2" y="2.2" width="1.5" height="3" fill="#ec5a5e"/><path d="M0.9 4.3L7 4.3L3.95 8.3Z" fill="#e3262b"/></svg><div class="t" style="left:20px;top:4.8px;font-size:11.5px;font-weight:bold;color:#1f2633">7</div></div>
<div class="abs" style="left:1344px;top:415px;width:34px;height:20px;border:1px solid #d5dde3;background:#fff"><svg class="abs" style="left:6px;top:4px" width="8" height="9" viewBox="0 0 8 9"><rect x="0.7" y="1" width="6.5" height="1.2" fill="#e3262b"/><rect x="3.2" y="2.2" width="1.5" height="3" fill="#ec5a5e"/><path d="M0.9 4.3L7 4.3L3.95 8.3Z" fill="#e3262b"/></svg><div class="t" style="left:20px;top:4.8px;font-size:11.5px;font-weight:bold;color:#1f2633">7</div></div>
<div class="abs" style="left:1379px;top:415px;width:34px;height:20px;border:1px solid #d5dde3;background:#fff"><svg class="abs" style="left:6px;top:4px" width="8" height="9" viewBox="0 0 8 9"><rect x="0.7" y="1" width="6.5" height="1.2" fill="#e3262b"/><rect x="3.2" y="2.2" width="1.5" height="3" fill="#ec5a5e"/><path d="M0.9 4.3L7 4.3L3.95 8.3Z" fill="#e3262b"/></svg><div class="t" style="left:20px;top:4.8px;font-size:11.5px;font-weight:bold;color:#1f2633">8</div></div>
<div class="abs" style="left:1414px;top:415px;width:34px;height:20px;border:1px solid #d5dde3;background:#fff"><svg class="abs" style="left:6px;top:4px" width="8" height="9" viewBox="0 0 8 9"><rect x="0.7" y="1" width="6.5" height="1.2" fill="#e3262b"/><rect x="3.2" y="2.2" width="1.5" height="3" fill="#ec5a5e"/><path d="M0.9 4.3L7 4.3L3.95 8.3Z" fill="#e3262b"/></svg><div class="t" style="left:20px;top:4.8px;font-size:11.5px;font-weight:bold;color:#1f2633">8</div></div>
<div class="abs" style="left:1449px;top:415px;width:34px;height:20px;border:1px solid #d5dde3;background:#fff"><svg class="abs" style="left:6px;top:4px" width="8" height="9" viewBox="0 0 8 9"><rect x="0.7" y="1" width="6.5" height="1.2" fill="#e3262b"/><rect x="3.2" y="2.2" width="1.5" height="3" fill="#ec5a5e"/><path d="M0.9 4.3L7 4.3L3.95 8.3Z" fill="#e3262b"/></svg><div class="t" style="left:20px;top:4.8px;font-size:11.5px;font-weight:bold;color:#1f2633">8</div></div>
<div class="abs" style="left:1484px;top:415px;width:34px;height:20px;border:1px solid #d5dde3;background:#fff"><svg class="abs" style="left:6px;top:4px" width="8" height="9" viewBox="0 0 8 9"><rect x="0.7" y="1" width="6.5" height="1.2" fill="#e3262b"/><rect x="3.2" y="2.2" width="1.5" height="3" fill="#ec5a5e"/><path d="M0.9 4.3L7 4.3L3.95 8.3Z" fill="#e3262b"/></svg><div class="t" style="left:20px;top:4.8px;font-size:11.5px;font-weight:bold;color:#1f2633">8</div></div>
<div class="abs" style="left:1519px;top:415px;width:34px;height:20px;border:1px solid #d5dde3;background:#fff"><svg class="abs" style="left:6px;top:4px" width="8" height="9" viewBox="0 0 8 9"><rect x="0.7" y="1" width="6.5" height="1.2" fill="#e3262b"/><rect x="3.2" y="2.2" width="1.5" height="3" fill="#ec5a5e"/><path d="M0.9 4.3L7 4.3L3.95 8.3Z" fill="#e3262b"/></svg><div class="t" style="left:20px;top:4.8px;font-size:11.5px;font-weight:bold;color:#1f2633">8</div></div>
<div class="abs" style="left:1554px;top:415px;width:34px;height:20px;border:1px solid #d5dde3;background:#fff"><svg class="abs" style="left:6px;top:4px" width="8" height="9" viewBox="0 0 8 9"><rect x="0.7" y="1" width="6.5" height="1.2" fill="#e3262b"/><rect x="3.2" y="2.2" width="1.5" height="3" fill="#ec5a5e"/><path d="M0.9 4.3L7 4.3L3.95 8.3Z" fill="#e3262b"/></svg><div class="t" style="left:20px;top:4.8px;font-size:11.5px;font-weight:bold;color:#1f2633">9</div></div>
<div class="abs" style="left:1589px;top:415px;width:34px;height:20px;border:1px solid #d5dde3;background:#fff"><svg class="abs" style="left:6px;top:4px" width="8" height="9" viewBox="0 0 8 9"><rect x="0.7" y="1" width="6.5" height="1.2" fill="#e3262b"/><rect x="3.2" y="2.2" width="1.5" height="3" fill="#ec5a5e"/><path d="M0.9 4.3L7 4.3L3.95 8.3Z" fill="#e3262b"/></svg><div class="t" style="left:20px;top:4.8px;font-size:11.5px;font-weight:bold;color:#1f2633">9</div></div>
<div class="abs" style="left:1624px;top:415px;width:34px;height:20px;border:1px solid #d5dde3;background:#fff"><svg class="abs" style="left:6px;top:4px" width="8" height="9" viewBox="0 0 8 9"><rect x="0.7" y="1" width="6.5" height="1.2" fill="#e3262b"/><rect x="3.2" y="2.2" width="1.5" height="3" fill="#ec5a5e"/><path d="M0.9 4.3L7 4.3L3.95 8.3Z" fill="#e3262b"/></svg><div class="t" style="left:20px;top:4.8px;font-size:11.5px;font-weight:bold;color:#1f2633">9</div></div>
<div class="abs" style="left:12px;top:457px;width:36px;height:36px;background:#fff;border:2px solid #d5dde3;border-radius:4px"></div>
<svg class="abs" style="left:20px;top:466px" width="24" height="24" viewBox="0 0 24 24">
<g fill="none" stroke="#14a0de" stroke-width="1.7"><circle cx="11" cy="10.7" r="9"/><ellipse cx="11" cy="10.7" rx="4" ry="9"/><path d="M2.5 7.4H19.5M2.5 14.2H12"/></g>
<circle cx="16.2" cy="15.8" r="5.6" fill="#fff"/><circle cx="16.2" cy="15.8" r="4.9" fill="#14a0de"/><path d="M15 13.3L18.6 15.8L15 18.3Z" fill="#8fd3f2"/>
</svg>
<div class="abs" style="left:176px;top:457px;width:36px;height:36px;background:#fff;border:2px solid #d5dde3;border-radius:4px"></div>
<div class="abs" style="left:192px;top:467px;width:4px;height:4px;border-radius:50%;background:#16a2e0"></div>
<div class="abs" style="left:192px;top:475px;width:4px;height:4px;border-radius:50%;background:#16a2e0"></div>
<div class="abs" style="left:192px;top:483px;width:4px;height:4px;border-radius:50%;background:#16a2e0"></div>
<div id="chips">
<div class="chip" style="left:222px;width:58px;background:#1b5a9b"><div class="cin" style="position:absolute;left:0;top:0;width:100%;height:100%;display:flex;align-items:center;justify-content:center;gap:5px"><span class="w" style="display:inline-block;transform:scaleX(0.84);margin:0 -4px;position:relative;top:1px">VOICE</span></div></div>
<div class="chip" style="left:290px;width:54px;background:#6ad2fc"><div class="cin" style="position:absolute;left:0;top:0;width:100%;height:100%;display:flex;align-items:center;justify-content:center;gap:5px"><span class="k" style="display:inline-block;transform:scaleX(0.84);margin:0 -4px;position:relative;top:1px">CHAT</span></div></div>
<div class="chip" style="left:354px;width:64px;background:#49a2ee"><div class="cin" style="position:absolute;left:0;top:0;width:100%;height:100%;display:flex;align-items:center;justify-content:center;gap:5px"><span class="w" style="display:inline-block;transform:scaleX(0.84);margin:0 -4px;position:relative;top:1px">E-MAIL</span></div></div>
<div class="chip" style="left:428px;width:63px;background:#fecb0e"><div class="cin" style="position:absolute;left:0;top:0;width:100%;height:100%;display:flex;align-items:center;justify-content:center;gap:5px"><span class="k" style="display:inline-block;transform:scaleX(0.84);margin:0 -4px;position:relative;top:1px">LUNCH</span></div></div>
<div class="chip" style="left:501px;width:62px;background:#a23e8e"><div class="cin" style="position:absolute;left:0;top:0;width:100%;height:100%;display:flex;align-items:center;justify-content:center;gap:5px"><span class="w" style="display:inline-block;transform:scaleX(0.84);margin:0 -4px;position:relative;top:1px">BREAK</span></div></div>
<div class="chip" style="left:573px;width:80px;background:#fd790c"><div class="cin" style="position:absolute;left:0;top:0;width:100%;height:100%;display:flex;align-items:center;justify-content:center;gap:5px"><span class="w" style="display:inline-block;transform:scaleX(0.84);margin:0 -4px;position:relative;top:1px">VACATION</span></div></div>
<div class="chip" style="left:663px;width:51px;background:#d4c8aa"><div class="cin" style="position:absolute;left:0;top:0;width:100%;height:100%;display:flex;align-items:center;justify-content:center;gap:5px"><span class="k" style="display:inline-block;transform:scaleX(0.84);margin:0 -4px;position:relative;top:1px">SICK</span></div></div>
<div class="chip" style="left:724px;width:95px;background:#05903e"><div class="cin" style="position:absolute;left:0;top:0;width:100%;height:100%;display:flex;align-items:center;justify-content:center;gap:5px"><span class="w" style="display:inline-block;transform:scaleX(0.84);margin:0 -4px;position:relative;top:1px">TRAINING</span><svg width="12" height="12" viewBox="0 0 12 12" style="display:block;position:relative;top:0.5px"><path d="M6.3 5.7L1.2 10.8" stroke="#000" stroke-width="2.6" stroke-linecap="round"/><path d="M6.3 5.7L1.2 10.8" stroke="#fff" stroke-width="1.1" stroke-linecap="round"/><path d="M7.4 1.2L10.8 4.6L9.6 5.3L8.3 6.6L8.4 9L7.5 9.9L2.1 4.5L3 3.6L5.4 3.7L6.7 2.4Z" fill="#fff" stroke="#000" stroke-width="1.1" stroke-linejoin="round"/></svg></div></div>
<div class="chip" style="left:829px;width:91px;background:#4eb20e"><div class="cin" style="position:absolute;left:0;top:0;width:100%;height:100%;display:flex;align-items:center;justify-content:center;gap:5px"><span class="w" style="display:inline-block;transform:scaleX(0.84);margin:0 -4px;position:relative;top:1px">MEETING</span><svg width="12" height="12" viewBox="0 0 12 12" style="display:block;position:relative;top:0.5px"><path d="M6.3 5.7L1.2 10.8" stroke="#000" stroke-width="2.6" stroke-linecap="round"/><path d="M6.3 5.7L1.2 10.8" stroke="#fff" stroke-width="1.1" stroke-linecap="round"/><path d="M7.4 1.2L10.8 4.6L9.6 5.3L8.3 6.6L8.4 9L7.5 9.9L2.1 4.5L3 3.6L5.4 3.7L6.7 2.4Z" fill="#fff" stroke="#000" stroke-width="1.1" stroke-linejoin="round"/></svg></div></div>
<div class="chip" style="left:930px;width:111px;background:#93e30b"><div class="cin" style="position:absolute;left:0;top:0;width:100%;height:100%;display:flex;align-items:center;justify-content:center;gap:5px"><span class="w" style="display:inline-block;transform:scaleX(0.84);margin:0 -4px;position:relative;top:1px">ONE ON ONE</span><svg width="12" height="12" viewBox="0 0 12 12" style="display:block;position:relative;top:0.5px"><path d="M6.3 5.7L1.2 10.8" stroke="#000" stroke-width="2.6" stroke-linecap="round"/><path d="M6.3 5.7L1.2 10.8" stroke="#fff" stroke-width="1.1" stroke-linecap="round"/><path d="M7.4 1.2L10.8 4.6L9.6 5.3L8.3 6.6L8.4 9L7.5 9.9L2.1 4.5L3 3.6L5.4 3.7L6.7 2.4Z" fill="#fff" stroke="#000" stroke-width="1.1" stroke-linejoin="round"/></svg></div></div>
<div class="chip" style="left:1051px;width:73px;background:#fd9e50"><div class="cin" style="position:absolute;left:0;top:0;width:100%;height:100%;display:flex;align-items:center;justify-content:center;gap:5px"><span class="k" style="display:inline-block;transform:scaleX(0.84);margin:0 -4px;position:relative;top:1px">HOLIDAY</span></div></div>
<div class="chip" style="left:1134px;width:79px;background:#b1624f"><div class="cin" style="position:absolute;left:0;top:0;width:100%;height:100%;display:flex;align-items:center;justify-content:center;gap:5px"><span class="w" style="display:inline-block;transform:scaleX(0.84);margin:0 -4px;position:relative;top:1px">TASK 1</span><svg width="12" height="12" viewBox="0 0 12 12" style="display:block;position:relative;top:0.5px"><path d="M6.3 5.7L1.2 10.8" stroke="#000" stroke-width="2.6" stroke-linecap="round"/><path d="M6.3 5.7L1.2 10.8" stroke="#fff" stroke-width="1.1" stroke-linecap="round"/><path d="M7.4 1.2L10.8 4.6L9.6 5.3L8.3 6.6L8.4 9L7.5 9.9L2.1 4.5L3 3.6L5.4 3.7L6.7 2.4Z" fill="#fff" stroke="#000" stroke-width="1.1" stroke-linejoin="round"/></svg></div></div>
<div class="chip" style="left:1223px;width:80px;background:#c89b91"><div class="cin" style="position:absolute;left:0;top:0;width:100%;height:100%;display:flex;align-items:center;justify-content:center;gap:5px"><span class="k" style="display:inline-block;transform:scaleX(0.84);margin:0 -4px;position:relative;top:1px">TASK 2</span><svg width="12" height="12" viewBox="0 0 12 12" style="display:block;position:relative;top:0.5px"><path d="M6.3 5.7L1.2 10.8" stroke="#fff" stroke-width="2.6" stroke-linecap="round"/><path d="M6.3 5.7L1.2 10.8" stroke="#000" stroke-width="1.1" stroke-linecap="round"/><path d="M7.4 1.2L10.8 4.6L9.6 5.3L8.3 6.6L8.4 9L7.5 9.9L2.1 4.5L3 3.6L5.4 3.7L6.7 2.4Z" fill="#000" stroke="#fff" stroke-width="1.1" stroke-linejoin="round"/></svg></div></div>
<div class="chip" style="left:1313px;width:80px;background:#e8b5aa"><div class="cin" style="position:absolute;left:0;top:0;width:100%;height:100%;display:flex;align-items:center;justify-content:center;gap:5px"><span class="k" style="display:inline-block;transform:scaleX(0.84);margin:0 -4px;position:relative;top:1px">TASK 3</span><svg width="12" height="12" viewBox="0 0 12 12" style="display:block;position:relative;top:0.5px"><path d="M6.3 5.7L1.2 10.8" stroke="#fff" stroke-width="2.6" stroke-linecap="round"/><path d="M6.3 5.7L1.2 10.8" stroke="#000" stroke-width="1.1" stroke-linecap="round"/><path d="M7.4 1.2L10.8 4.6L9.6 5.3L8.3 6.6L8.4 9L7.5 9.9L2.1 4.5L3 3.6L5.4 3.7L6.7 2.4Z" fill="#000" stroke="#fff" stroke-width="1.1" stroke-linejoin="round"/></svg></div></div>
</div>
<div class="t" style="left:12px;top:512px;font-size:13px;color:#50565e;letter-spacing:0.12px">America/Chicago</div>
<div class="t" style="left:12px;top:532px;font-size:13px;font-weight:bold;color:#474d55;letter-spacing:-0.3px">UTC -5 hours</div>
<div class="abs" style="left:222px;top:510px;width:1437px;height:100px;background:#fff;border:1px solid #cbd6ee"></div>
<div class="abs" style="left:222px;top:562px;width:1437px;height:48px;background:#f7f8fa;border:1px solid #cbd6ee"></div>
<div class="abs" style="left:1657px;top:562px;width:1px;height:48px;background:#cbd6ee"></div>
<div class="t" style="left:233px;top:530.18px;font-size:15.5px;color:#1f1f1f">12:00 AM</div>
<div class="abs" style="left:362px;top:510px;width:1px;height:52px;background:#cbd6ee"></div>
<div class="t" style="left:373px;top:530.18px;font-size:15.5px;color:#1f1f1f">01:00 AM</div>
<div class="abs" style="left:502px;top:510px;width:1px;height:52px;background:#cbd6ee"></div>
<div class="t" style="left:513px;top:530.18px;font-size:15.5px;color:#1f1f1f">02:00 AM</div>
<div class="abs" style="left:642px;top:510px;width:1px;height:52px;background:#cbd6ee"></div>
<div class="t" style="left:653px;top:530.18px;font-size:15.5px;color:#1f1f1f">03:00 AM</div>
<div class="abs" style="left:782px;top:510px;width:1px;height:52px;background:#cbd6ee"></div>
<div class="t" style="left:793px;top:530.18px;font-size:15.5px;color:#1f1f1f">04:00 AM</div>
<div class="abs" style="left:922px;top:510px;width:1px;height:52px;background:#cbd6ee"></div>
<div class="t" style="left:933px;top:530.18px;font-size:15.5px;color:#1f1f1f">05:00 AM</div>
<div class="abs" style="left:1062px;top:510px;width:1px;height:52px;background:#cbd6ee"></div>
<div class="t" style="left:1073px;top:530.18px;font-size:15.5px;color:#1f1f1f">06:00 AM</div>
<div class="abs" style="left:1202px;top:510px;width:1px;height:52px;background:#cbd6ee"></div>
<div class="t" style="left:1213px;top:530.18px;font-size:15.5px;color:#1f1f1f">07:00 AM</div>
<div class="abs" style="left:1342px;top:510px;width:1px;height:52px;background:#cbd6ee"></div>
<div class="t" style="left:1353px;top:530.18px;font-size:15.5px;color:#1f1f1f">08:00 AM</div>
<div class="abs" style="left:1482px;top:510px;width:1px;height:52px;background:#cbd6ee"></div>
<div class="t" style="left:1493px;top:530.18px;font-size:15.5px;color:#1f1f1f">09:00 AM</div>
<div class="abs" style="left:1622px;top:510px;width:1px;height:52px;background:#cbd6ee"></div>
<div class="t" style="left:1633px;top:530.18px;font-size:15.5px;color:#1f1f1f">10:00 AM</div>
<div class="abs" style="left:1659px;top:500px;width:15px;height:360px;background:#f7f8fa"></div>
<div class="abs" style="left:1658px;top:510px;width:1px;height:335px;background:#cbd6ee"></div>
<div class="t" style="left:222px;width:35px;text-align:center;top:581px;font-size:12px;color:#333">:00</div>
<div class="abs" style="left:257px;top:562px;width:1px;height:48px;background:#cbd6ee"></div>
<div class="t" style="left:257px;width:35px;text-align:center;top:581px;font-size:12px;color:#333">:15</div>
<div class="abs" style="left:292px;top:562px;width:1px;height:48px;background:#cbd6ee"></div>
<div class="t" style="left:292px;width:35px;text-align:center;top:581px;font-size:12px;color:#333">:30</div>
<div class="abs" style="left:327px;top:562px;width:1px;height:48px;background:#cbd6ee"></div>
<div class="t" style="left:327px;width:35px;text-align:center;top:581px;font-size:12px;color:#333">:45</div>
<div class="abs" style="left:362px;top:562px;width:1px;height:48px;background:#cbd6ee"></div>
<div class="t" style="left:362px;width:35px;text-align:center;top:581px;font-size:12px;color:#333">:00</div>
<div class="abs" style="left:397px;top:562px;width:1px;height:48px;background:#cbd6ee"></div>
<div class="t" style="left:397px;width:35px;text-align:center;top:581px;font-size:12px;color:#333">:15</div>
<div class="abs" style="left:432px;top:562px;width:1px;height:48px;background:#cbd6ee"></div>
<div class="t" style="left:432px;width:35px;text-align:center;top:581px;font-size:12px;color:#333">:30</div>
<div class="abs" style="left:467px;top:562px;width:1px;height:48px;background:#cbd6ee"></div>
<div class="t" style="left:467px;width:35px;text-align:center;top:581px;font-size:12px;color:#333">:45</div>
<div class="abs" style="left:502px;top:562px;width:1px;height:48px;background:#cbd6ee"></div>
<div class="t" style="left:502px;width:35px;text-align:center;top:581px;font-size:12px;color:#333">:00</div>
<div class="abs" style="left:537px;top:562px;width:1px;height:48px;background:#cbd6ee"></div>
<div class="t" style="left:537px;width:35px;text-align:center;top:581px;font-size:12px;color:#333">:15</div>
<div class="abs" style="left:572px;top:562px;width:1px;height:48px;background:#cbd6ee"></div>
<div class="t" style="left:572px;width:35px;text-align:center;top:581px;font-size:12px;color:#333">:30</div>
<div class="abs" style="left:607px;top:562px;width:1px;height:48px;background:#cbd6ee"></div>
<div class="t" style="left:607px;width:35px;text-align:center;top:581px;font-size:12px;color:#333">:45</div>
<div class="abs" style="left:642px;top:562px;width:1px;height:48px;background:#cbd6ee"></div>
<div class="t" style="left:642px;width:35px;text-align:center;top:581px;font-size:12px;color:#333">:00</div>
<div class="abs" style="left:677px;top:562px;width:1px;height:48px;background:#cbd6ee"></div>
<div class="t" style="left:677px;width:35px;text-align:center;top:581px;font-size:12px;color:#333">:15</div>
<div class="abs" style="left:712px;top:562px;width:1px;height:48px;background:#cbd6ee"></div>
<div class="t" style="left:712px;width:35px;text-align:center;top:581px;font-size:12px;color:#333">:30</div>
<div class="abs" style="left:747px;top:562px;width:1px;height:48px;background:#cbd6ee"></div>
<div class="t" style="left:747px;width:35px;text-align:center;top:581px;font-size:12px;color:#333">:45</div>
<div class="abs" style="left:782px;top:562px;width:1px;height:48px;background:#cbd6ee"></div>
<div class="t" style="left:782px;width:35px;text-align:center;top:581px;font-size:12px;color:#333">:00</div>
<div class="abs" style="left:817px;top:562px;width:1px;height:48px;background:#cbd6ee"></div>
<div class="t" style="left:817px;width:35px;text-align:center;top:581px;font-size:12px;color:#333">:15</div>
<div class="abs" style="left:852px;top:562px;width:1px;height:48px;background:#cbd6ee"></div>
<div class="t" style="left:852px;width:35px;text-align:center;top:581px;font-size:12px;color:#333">:30</div>
<div class="abs" style="left:887px;top:562px;width:1px;height:48px;background:#cbd6ee"></div>
<div class="t" style="left:887px;width:35px;text-align:center;top:581px;font-size:12px;color:#333">:45</div>
<div class="abs" style="left:922px;top:562px;width:1px;height:48px;background:#cbd6ee"></div>
<div class="t" style="left:922px;width:35px;text-align:center;top:581px;font-size:12px;color:#333">:00</div>
<div class="abs" style="left:957px;top:562px;width:1px;height:48px;background:#cbd6ee"></div>
<div class="t" style="left:957px;width:35px;text-align:center;top:581px;font-size:12px;color:#333">:15</div>
<div class="abs" style="left:992px;top:562px;width:1px;height:48px;background:#cbd6ee"></div>
<div class="t" style="left:992px;width:35px;text-align:center;top:581px;font-size:12px;color:#333">:30</div>
<div class="abs" style="left:1027px;top:562px;width:1px;height:48px;background:#cbd6ee"></div>
<div class="t" style="left:1027px;width:35px;text-align:center;top:581px;font-size:12px;color:#333">:45</div>
<div class="abs" style="left:1062px;top:562px;width:1px;height:48px;background:#cbd6ee"></div>
<div class="t" style="left:1062px;width:35px;text-align:center;top:581px;font-size:12px;color:#333">:00</div>
<div class="abs" style="left:1097px;top:562px;width:1px;height:48px;background:#cbd6ee"></div>
<div class="t" style="left:1097px;width:35px;text-align:center;top:581px;font-size:12px;color:#333">:15</div>
<div class="abs" style="left:1132px;top:562px;width:1px;height:48px;background:#cbd6ee"></div>
<div class="t" style="left:1132px;width:35px;text-align:center;top:581px;font-size:12px;color:#333">:30</div>
<div class="abs" style="left:1167px;top:562px;width:1px;height:48px;background:#cbd6ee"></div>
<div class="t" style="left:1167px;width:35px;text-align:center;top:581px;font-size:12px;color:#333">:45</div>
<div class="abs" style="left:1202px;top:562px;width:1px;height:48px;background:#cbd6ee"></div>
<div class="t" style="left:1202px;width:35px;text-align:center;top:581px;font-size:12px;color:#333">:00</div>
<div class="abs" style="left:1237px;top:562px;width:1px;height:48px;background:#cbd6ee"></div>
<div class="t" style="left:1237px;width:35px;text-align:center;top:581px;font-size:12px;color:#333">:15</div>
<div class="abs" style="left:1272px;top:562px;width:1px;height:48px;background:#cbd6ee"></div>
<div class="t" style="left:1272px;width:35px;text-align:center;top:581px;font-size:12px;color:#333">:30</div>
<div class="abs" style="left:1307px;top:562px;width:1px;height:48px;background:#cbd6ee"></div>
<div class="t" style="left:1307px;width:35px;text-align:center;top:581px;font-size:12px;color:#333">:45</div>
<div class="abs" style="left:1342px;top:562px;width:1px;height:48px;background:#cbd6ee"></div>
<div class="t" style="left:1342px;width:35px;text-align:center;top:581px;font-size:12px;color:#333">:00</div>
<div class="abs" style="left:1377px;top:562px;width:1px;height:48px;background:#cbd6ee"></div>
<div class="t" style="left:1377px;width:35px;text-align:center;top:581px;font-size:12px;color:#333">:15</div>
<div class="abs" style="left:1412px;top:562px;width:1px;height:48px;background:#cbd6ee"></div>
<div class="t" style="left:1412px;width:35px;text-align:center;top:581px;font-size:12px;color:#333">:30</div>
<div class="abs" style="left:1447px;top:562px;width:1px;height:48px;background:#cbd6ee"></div>
<div class="t" style="left:1447px;width:35px;text-align:center;top:581px;font-size:12px;color:#333">:45</div>
<div class="abs" style="left:1482px;top:562px;width:1px;height:48px;background:#cbd6ee"></div>
<div class="t" style="left:1482px;width:35px;text-align:center;top:581px;font-size:12px;color:#333">:00</div>
<div class="abs" style="left:1517px;top:562px;width:1px;height:48px;background:#cbd6ee"></div>
<div class="t" style="left:1517px;width:35px;text-align:center;top:581px;font-size:12px;color:#333">:15</div>
<div class="abs" style="left:1552px;top:562px;width:1px;height:48px;background:#cbd6ee"></div>
<div class="t" style="left:1552px;width:35px;text-align:center;top:581px;font-size:12px;color:#333">:30</div>
<div class="abs" style="left:1587px;top:562px;width:1px;height:48px;background:#cbd6ee"></div>
<div class="t" style="left:1587px;width:35px;text-align:center;top:581px;font-size:12px;color:#333">:45</div>
<div class="abs" style="left:1622px;top:562px;width:1px;height:48px;background:#cbd6ee"></div>
<div class="t" style="left:1622px;width:35px;text-align:center;top:581px;font-size:12px;color:#333">:00</div>
<div class="abs" style="left:12px;top:609px;width:1647px;height:221px;background:#fff;border:1px solid #cbd6ee;border-bottom:none"></div>
<div class="abs" style="left:12px;top:829px;width:211px;height:1px;background:#cbd6ee"></div>
<div class="abs" style="left:222px;top:609px;width:1px;height:236px;background:#cbd6ee"></div>
<svg class="abs" style="left:23px;top:622.0px" width="14" height="14" viewBox="0 0 14 14"><circle cx="7" cy="7" r="7" fill="#14a0de"/><path d="M4.6 5.3Q4.6 3 7 3Q9.4 3 9.4 5.1Q9.4 6.3 8.1 7Q7 7.6 7 8.6" fill="none" stroke="#fff" stroke-width="1.7"/><circle cx="7" cy="10.7" r="1" fill="#fff"/></svg>
<div class="t" style="left:47px;top:622.57px;font-size:13.5px;color:#2f3438;letter-spacing:-0.22px;">Andy Brown</div>
<div class="abs" style="left:24px;top:639.0px;width:11px;height:11px;border-radius:50%;background:#2394d4"></div>
<div class="abs" style="left:38px;top:639.0px;width:11px;height:11px;border-radius:50%;background:#ea9c7a"></div>
<svg class="abs" style="left:198px;top:624.0px" width="12" height="12" viewBox="0 0 12 12" fill="#14a0de"><circle cx="6" cy="3" r="2.9"/><path d="M0.5 11.5V9.7Q0.5 6.7 3.5 6.7H8.5Q11.5 6.7 11.5 9.7V11.5Z"/></svg>
<div class="abs" style="left:12px;top:654px;width:210px;height:1px;background:#cbd6ee"></div>
<div class="abs" style="left:223px;top:654px;width:1435px;height:1px;background:#e1e4e8"></div>
<svg class="abs" style="left:23px;top:666.2px" width="14" height="14" viewBox="0 0 14 14"><circle cx="7" cy="7" r="7" fill="#14a0de"/><path d="M4.6 5.3Q4.6 3 7 3Q9.4 3 9.4 5.1Q9.4 6.3 8.1 7Q7 7.6 7 8.6" fill="none" stroke="#fff" stroke-width="1.7"/><circle cx="7" cy="10.7" r="1" fill="#fff"/></svg>
<div class="t" style="left:47px;top:666.77px;font-size:13.5px;color:#2f3438;letter-spacing:-0.22px;">Emily Moore</div>
<div class="abs" style="left:24px;top:683.2px;width:11px;height:11px;border-radius:50%;background:#2394d4"></div>
<div class="abs" style="left:38px;top:683.2px;width:11px;height:11px;border-radius:50%;background:#ea9c7a"></div>
<svg class="abs" style="left:198px;top:668.2px" width="12" height="12" viewBox="0 0 12 12" fill="#14a0de"><circle cx="6" cy="3" r="2.9"/><path d="M0.5 11.5V9.7Q0.5 6.7 3.5 6.7H8.5Q11.5 6.7 11.5 9.7V11.5Z"/></svg>
<div class="abs" style="left:12px;top:698px;width:210px;height:1px;background:#cbd6ee"></div>
<div class="abs" style="left:223px;top:698px;width:1435px;height:1px;background:#e1e4e8"></div>
<svg class="abs" style="left:23px;top:710.4px" width="14" height="14" viewBox="0 0 14 14"><circle cx="7" cy="7" r="7" fill="#14a0de"/><path d="M4.6 5.3Q4.6 3 7 3Q9.4 3 9.4 5.1Q9.4 6.3 8.1 7Q7 7.6 7 8.6" fill="none" stroke="#fff" stroke-width="1.7"/><circle cx="7" cy="10.7" r="1" fill="#fff"/></svg>
<div class="t" style="left:47px;top:710.97px;font-size:13.5px;color:#2f3438;letter-spacing:-0.22px;">Ethan Jones</div>
<div class="abs" style="left:24px;top:727.4px;width:11px;height:11px;border-radius:50%;background:#2394d4"></div>
<svg class="abs" style="left:198px;top:712.4px" width="12" height="12" viewBox="0 0 12 12" fill="#14a0de"><circle cx="6" cy="3" r="2.9"/><path d="M0.5 11.5V9.7Q0.5 6.7 3.5 6.7H8.5Q11.5 6.7 11.5 9.7V11.5Z"/></svg>
<div class="abs" style="left:12px;top:742px;width:210px;height:1px;background:#cbd6ee"></div>
<div class="abs" style="left:223px;top:742px;width:1435px;height:1px;background:#e1e4e8"></div>
<svg class="abs" style="left:23px;top:754.6px" width="14" height="14" viewBox="0 0 14 14"><circle cx="7" cy="7" r="7" fill="#14a0de"/><path d="M4.6 5.3Q4.6 3 7 3Q9.4 3 9.4 5.1Q9.4 6.3 8.1 7Q7 7.6 7 8.6" fill="none" stroke="#fff" stroke-width="1.7"/><circle cx="7" cy="10.7" r="1" fill="#fff"/></svg>
<div class="t" style="left:47px;top:755.17px;font-size:13.5px;color:#2f3438;letter-spacing:-0.22px;">Harry Williams</div>
<div class="abs" style="left:24px;top:771.6px;width:11px;height:11px;border-radius:50%;background:#2394d4"></div>
<div class="abs" style="left:38px;top:771.6px;width:11px;height:11px;border-radius:50%;background:#ea9c7a"></div>
<svg class="abs" style="left:198px;top:756.6px" width="12" height="12" viewBox="0 0 12 12" fill="#14a0de"><circle cx="6" cy="3" r="2.9"/><path d="M0.5 11.5V9.7Q0.5 6.7 3.5 6.7H8.5Q11.5 6.7 11.5 9.7V11.5Z"/></svg>
<div class="abs" style="left:12px;top:786px;width:210px;height:1px;background:#cbd6ee"></div>
<div class="abs" style="left:223px;top:786px;width:1435px;height:1px;background:#e1e4e8"></div>
<svg class="abs" style="left:23px;top:798.8px" width="14" height="14" viewBox="0 0 14 14"><circle cx="7" cy="7" r="7" fill="#14a0de"/><path d="M4.6 5.3Q4.6 3 7 3Q9.4 3 9.4 5.1Q9.4 6.3 8.1 7Q7 7.6 7 8.6" fill="none" stroke="#fff" stroke-width="1.7"/><circle cx="7" cy="10.7" r="1" fill="#fff"/></svg>
<div class="t" style="left:47px;top:799.37px;font-size:13.5px;color:#2f3438;letter-spacing:-0.22px;">Isabella Tylor</div>
<div class="abs" style="left:24px;top:815.8px;width:11px;height:11px;border-radius:50%;background:#2394d4"></div>
<div class="abs" style="left:38px;top:815.8px;width:11px;height:11px;border-radius:50%;background:#ea9c7a"></div>
<svg class="abs" style="left:198px;top:800.8px" width="12" height="12" viewBox="0 0 12 12" fill="#14a0de"><circle cx="6" cy="3" r="2.9"/><path d="M0.5 11.5V9.7Q0.5 6.7 3.5 6.7H8.5Q11.5 6.7 11.5 9.7V11.5Z"/></svg>
<div class="abs" style="left:222px;top:830px;width:1437px;height:15px;background:#e5e8eb;border-bottom:1px solid #cbd6ee;border-right:1px solid #cbd6ee"></div>
<div class="abs" style="left:223px;top:830px;width:612px;height:14px;background:#cfd3d6;border-radius:3px 7px 7px 3px"></div>
</body></html>
